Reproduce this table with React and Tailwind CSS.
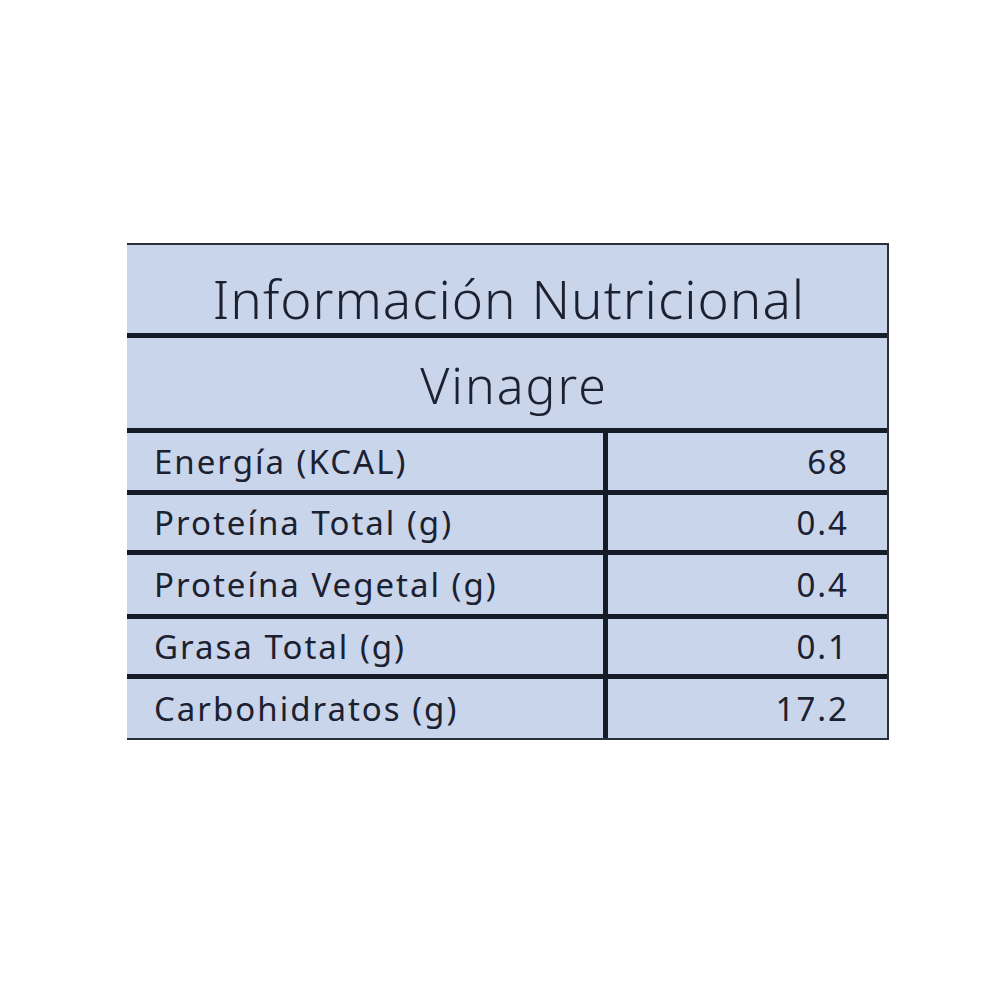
const rows = [
  ["Energía (KCAL)", "68", "h-[62px]"],
  ["Proteína Total (g)", "0.4", "h-[60px]"],
  ["Proteína Vegetal (g)", "0.4", "h-[64px]"],
  ["Grasa Total (g)", "0.1", "h-[60px]"],
  ["Carbohidratos (g)", "17.2", "h-[59px]"],
];

export default function App() {
  return (
    <div
      className="w-[1000px] h-[1000px] bg-white pt-[243px] pl-[127px]"
      style={{ fontFamily: '"Noto Sans", "Open Sans", sans-serif' }}
    >
      <div className="w-[762px] bg-[#c9d5ea] text-[#1b2130] border-t-2 border-r-2 border-b-2 border-[#2b2f3a]">
        <div className="h-[93px] flex items-center justify-center pt-[18px] pl-[4px] border-b-[5px] border-[#161b28]">
          <h1 className="text-[53px] font-light tracking-[1px] leading-none">
            Información Nutricional
          </h1>
        </div>
        <div className="h-[95px] flex items-center justify-center pt-[4px] pl-[14px] border-b-[5px] border-[#161b28]">
          <h2 className="text-[50px] font-light tracking-[2px] leading-none">Vinagre</h2>
        </div>
        {rows.map(([label, value, h], i) => (
          <div
            key={label}
            className={
              "grid grid-cols-[481px_1fr] " +
              h +
              (i < rows.length - 1 ? " border-b-[5px] border-[#161b28]" : "")
            }
          >
            <div className="flex items-center pl-[27px] border-r-[5px] border-[#161b28] text-[33px] font-normal tracking-[2px]">
              {label}
            </div>
            <div className="flex items-center justify-end pr-[38px] text-[33px] font-normal tracking-[2px]">
              {value}
            </div>
          </div>
        ))}
      </div>
    </div>
  );
}
